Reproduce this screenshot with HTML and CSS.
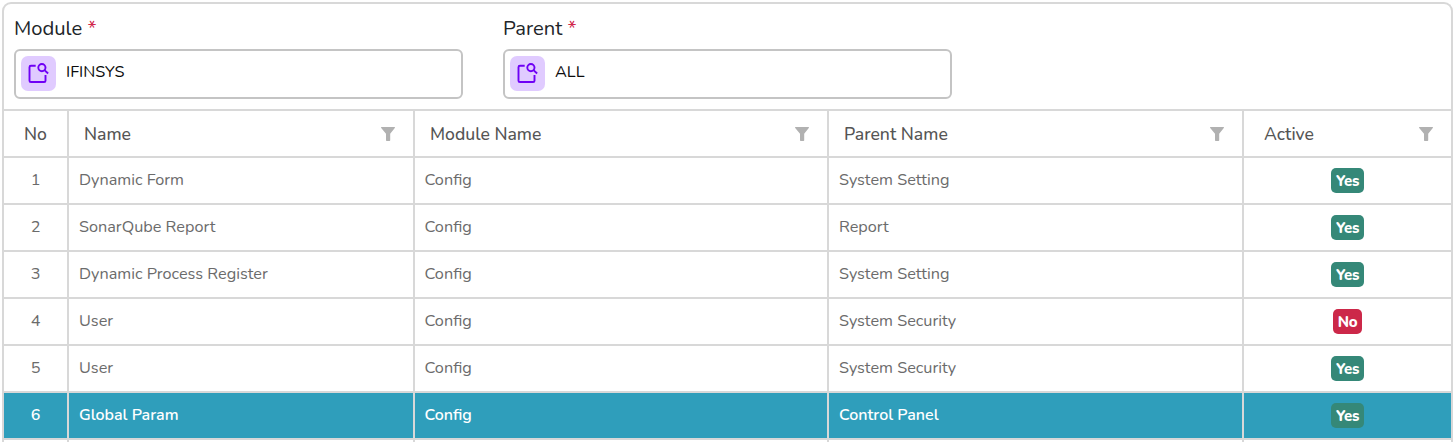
FILE: index.html
```html
<!DOCTYPE html>
<html lang="en">
<head>
<meta charset="utf-8">
<title>Menu list</title>
<link rel="stylesheet" href="styles.css">
</head>
<body>
<svg class="defs" width="0" height="0">
  <symbol id="lookup" viewBox="0 0 22 22">
    <g fill="none" stroke="#6f00f5" stroke-width="1.9">
      <path d="M8.7 3.8H3.9Q2.5 3.8 2.5 5.2V18.7Q2.5 20 3.9 20H17.1Q18.5 20 18.5 18.7V13" />
      <circle cx="14.9" cy="5.6" r="3.6" />
      <path d="M17.5 8.1L21.1 11.5" />
    </g>
  </symbol>
  <symbol id="funnel" viewBox="0 0 14 14">
    <path d="M.4 0H13.6Q14.3 .3 13.8 1L9.2 6.7V13.2Q9.2 14 8.5 14H5.7Q5 14 5 13.2V6.7L.2 1Q-.3 .3 .4 0Z" fill="#b1b1b1" />
  </symbol>
</svg>
<main class="panel">
  <form class="filters">
    <div class="field">
      <div class="label">Module <span class="req">*</span></div>
      <div class="input"><span class="tile"><svg><use href="#lookup" /></svg></span><span class="value">IFINSYS</span></div>
    </div>
    <div class="field">
      <div class="label">Parent <span class="req">*</span></div>
      <div class="input"><span class="tile"><svg><use href="#lookup" /></svg></span><span class="value">ALL</span></div>
    </div>
  </form>
  <section class="grid">
    <div class="row head">
      <div class="num"><span>No</span></div>
      <div><span>Name</span><svg><use href="#funnel" /></svg></div>
      <div><span>Module Name</span><svg><use href="#funnel" /></svg></div>
      <div><span>Parent Name</span><svg><use href="#funnel" /></svg></div>
      <div class="act"><span>Active</span><svg><use href="#funnel" /></svg></div>
    </div>
    <div class="row"><div class="num">1</div><div>Dynamic Form</div><div>Config</div><div>System Setting</div><div class="status"><b class="yes">Yes</b></div></div>
    <div class="row"><div class="num">2</div><div>SonarQube Report</div><div>Config</div><div>Report</div><div class="status"><b class="yes">Yes</b></div></div>
    <div class="row"><div class="num">3</div><div>Dynamic Process Register</div><div>Config</div><div>System Setting</div><div class="status"><b class="yes">Yes</b></div></div>
    <div class="row"><div class="num">4</div><div>User</div><div>Config</div><div>System Security</div><div class="status"><b class="no">No</b></div></div>
    <div class="row"><div class="num">5</div><div>User</div><div>Config</div><div>System Security</div><div class="status"><b class="yes">Yes</b></div></div>
    <div class="row selected"><div class="num">6</div><div>Global Param</div><div>Config</div><div>Control Panel</div><div class="status"><b class="yes">Yes</b></div></div>
    <div class="row last"><div></div><div></div><div></div><div></div><div></div></div>
  </section>
</main>
</body>
</html>
```
FILE: styles.css
```css
* { box-sizing: border-box; }
body {
  margin: 0;
  height: 442px;
  padding: 2px 0 0 2px;
  background: #fff;
  font-family: Nunito, Lato, "Open Sans", sans-serif;
}
.defs { position: absolute; }
.panel {
  width: 1451px;
  height: 440px;
  border: 2px solid #d8d8d8;
  border-bottom: 0;
  border-radius: 9px 9px 0 0;
}
.filters {
  display: flex;
  gap: 40px;
  height: 105px;
  padding: 11px 10px 0;
}
.field { width: 449px; }
.label {
  height: 34px;
  padding-top: 2px;
  font-size: 20.2px;
  font-weight: 450;
  line-height: 24px;
  color: #212529;
  white-space: nowrap;
}
.req { color: #d1264a; }
.input {
  display: flex;
  height: 50px;
  padding: 5px;
  border: 2px solid #c4c4c4;
  border-radius: 6px;
}
.tile {
  width: 35px;
  height: 35px;
  padding: 6px;
  border-radius: 7px;
  background: #e0cbff;
}
.tile svg { display: block; width: 22px; height: 22px; }
.value {
  margin-left: 10px;
  padding-top: 5px;
  font-size: 16.3px;
  line-height: 22px;
  color: #0c0c0c;
}
.row {
  display: grid;
  grid-template-columns: 63px 346px 414px 415px 209px;
  height: 47px;
  border-top: 2px solid #d8d8d8;
  font-size: 16.25px;
  color: #6b6b6b;
}
.row > div {
  display: flex;
  align-items: center;
  padding: 0 10px 1px;
  border-left: 2px solid #d8d8d8;
  white-space: nowrap;
}
.row > div:first-child { border-left: 0; }
.row > div:nth-child(3) { padding-left: 9.5px; }
.row .num { justify-content: center; padding-left: 0; padding-right: 0; }
.row.head { font-size: 17.6px; font-weight: 500; color: #555; }
.row.head > div { justify-content: space-between; padding: 0 18.5px 0 15px; }
.row.head .num { justify-content: center; padding: 0; }
.row.head .act { padding-left: 20px; padding-right: 18px; }
.head svg { width: 14px; height: 14px; }
.row .status { justify-content: center; padding: 0 0 1px; }
.status b {
  width: 33px;
  height: 25px;
  border-radius: 5px;
  font-size: 15px;
  font-weight: 800;
  letter-spacing: -0.2px;
  line-height: 26px;
  text-align: center;
  color: #fff;
  background: #358878;
}
.status .no { width: 29px; background: #cc2849; }
.row.selected { font-size: 16px; font-weight: 600; color: #fff; }
.selected > div { background: #2f9ebb; }
.row.last { height: 4px; }
.row.last > div { padding: 0; }
```
